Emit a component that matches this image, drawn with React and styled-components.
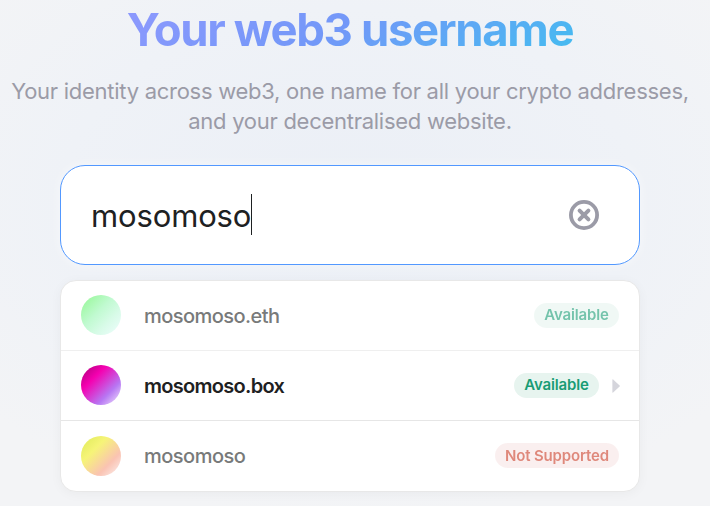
import styled, {createGlobalStyle} from 'styled-components';

const RESULTS = [
    {
        name: 'mosomoso.eth',
        status: 'Available',
        tone: 'green',
        faded: true,
        spacing: '-0.55px',
        avatar: 'linear-gradient(135deg, #9df8a0 10%, #c0fad0 42%, #d8fbe8 68%, #ecfdfb 95%)',
    },
    {
        name: 'mosomoso.box',
        status: 'Available',
        tone: 'green',
        faded: false,
        spacing: '-0.7px',
        avatar: 'linear-gradient(135deg, #c4008c 12%, #f500b0 32%, #b777f3 70%, #e4cdfb 92%)',
    },
    {
        name: 'mosomoso',
        status: 'Not Supported',
        tone: 'red',
        faded: true,
        spacing: '-0.5px',
        avatar: 'linear-gradient(135deg, #e6ee63 12%, #f6f478 34%, #fac3b2 70%, #fbe6e2 92%)',
    },
];

const TONES = {
    green: {text: '#199c75', background: '#e7f4ef', width: '85px', line: '24px'},
    red: {text: '#ca3a24', background: '#f8e6e6', width: '124px', line: '26px'},
};


function App () {
    return (
        <Page>
            <GlobalStyle />
            <Title>Your web3 username</Title>
            <Subtitle>
                <SubtitleLine>Your identity across web3, one name for all your crypto addresses,</SubtitleLine>
                <SubtitleLine>and your decentralised website.</SubtitleLine>
            </Subtitle>
            <SearchBox>
                <SearchText>mosomoso</SearchText>
                <Caret />
                <ClearIcon />
            </SearchBox>
            <ResultList>
                {RESULTS.map(r => <Result key={r.name} {...r} />)}
            </ResultList>
        </Page>
    );
}


const GlobalStyle = createGlobalStyle`
    body {
        margin: 0;
        font-family: Inter, "Liberation Sans", sans-serif;
    }
`

const Page = styled.div`
    box-sizing: border-box;
    width: 710px;
    height: 506px;
    overflow: hidden;
    display: flex;
    flex-direction: column;
    align-items: center;
    padding-right: 10px;
    background: radial-gradient(ellipse 480px 320px at 350px 200px, #ebeff6 0%, #eff2f7 60%, #f3f4f6 100%);
`

const Title = styled.h1`
    margin: 0;
    padding: 0 30px;
    height: 60px;
    line-height: 60px;
    font-size: 45.5px;
    font-weight: 700;
    letter-spacing: -1.37px;
    white-space: nowrap;
    color: transparent;
    background: linear-gradient(330deg, #44bcf0 7%, #7298f8 52%, #9699ff 105%);
    background-clip: text;
    -webkit-background-clip: text;
`

const Subtitle = styled.div`
    margin-top: 16px;
    font-size: 22px;
    line-height: 30px;
    letter-spacing: -0.27px;
    color: #9b9ba7;
`

const SubtitleLine = styled.div`
    text-align: center;
    white-space: nowrap;
`


/******************************
 * SEARCH BOX
 */

const SearchBox = styled.div`
    box-sizing: border-box;
    flex: none;
    width: 580px;
    height: 100px;
    margin-top: 29px;
    padding: 0 40px 0 30px;
    display: flex;
    align-items: center;
    background: white;
    border: 1px solid #5298ff;
    border-radius: 25px;
    box-shadow: 0 0 12px rgba(255, 255, 255, 0.5);
`

const SearchText = styled.div`
    font-size: 31px;
    letter-spacing: -0.14px;
    color: #1e2122;
`

const Caret = styled.div`
    width: 1px;
    height: 41px;
    margin-bottom: 1px;
    background: #1e2122;
`

function ClearIcon () {
    return (
        <ClearSvg viewBox="0 0 30 30" fill="none" stroke="#9b9ba7">
            <circle cx="15" cy="15" r="13.1" strokeWidth="3.8" />
            <path d="M10.6 10.6L19.4 19.4M19.4 10.6L10.6 19.4" strokeWidth="4" strokeLinecap="round" />
        </ClearSvg>
    );
}

const ClearSvg = styled.svg`
    width: 30px;
    height: 30px;
    margin-left: auto;
`


/******************************
 * RESULT LIST
 */

function Result ({name, status, tone, faded, spacing, avatar}) {
    return (
        <ResultRow>
            <Avatar $fill={avatar} />
            <ResultName $faded={faded} $spacing={spacing}>{name}</ResultName>
            <Pill $tone={TONES[tone]} $faded={faded}>{status}</Pill>
            {!faded && <Arrow viewBox="0 0 8 14"><path d="M0.4 0.8Q0.4 0 1.1 0.5L7.6 6.4Q8.2 7 7.6 7.6L1.1 13.5Q0.4 14 0.4 13.2Z" fill="#d5d5dc" /></Arrow>}
        </ResultRow>
    );
}

const ResultList = styled.div`
    box-sizing: border-box;
    flex: none;
    width: 580px;
    height: 212px;
    margin-top: 15px;
    background: white;
    border: 1px solid #e8e8e8;
    border-radius: 16px;
    overflow: hidden;
    box-shadow: 0 2px 12px rgba(0, 0, 0, 0.04);
`

const Avatar = styled.div`
    width: 40px;
    height: 40px;
    margin-bottom: 1px;
    border-radius: 50%;
    background: ${p => p.$fill};
`

const ResultRow = styled.div`
    box-sizing: border-box;
    height: 70px;
    padding: 0 20px;
    display: flex;
    align-items: center;
    border-bottom: 1px solid #e6e6e6;

    &:first-child {
        border-bottom-color: #efefef;
    }

    &:last-child {
        border-bottom-color: transparent;
    }

    &:last-child ${Avatar} {
        margin: 1px 0 0;
    }
`

const ResultName = styled.div`
    margin-left: 23px;
    font-size: 20px;
    line-height: 27px;
    padding-top: 2px;
    font-weight: ${p => p.$faded ? 500 : 600};
    letter-spacing: ${p => p.$spacing};
    color: ${p => p.$faded ? '#787a7a' : '#1e2122'};
`

const Pill = styled.div`
    width: ${p => p.$tone.width};
    height: 25px;
    margin-left: auto;
    border-radius: 13px;
    line-height: ${p => p.$tone.line};
    text-align: center;
    white-space: nowrap;
    font-size: 15px;
    font-weight: 600;
    letter-spacing: -0.15px;
    color: ${p => p.$tone.text};
    background: ${p => p.$tone.background};
    opacity: ${p => p.$faded ? 0.6 : 1};
`

const Arrow = styled.svg`
    width: 8px;
    height: 14px;
    margin-left: 13px;
    margin-right: -1px;
`


export default App;
